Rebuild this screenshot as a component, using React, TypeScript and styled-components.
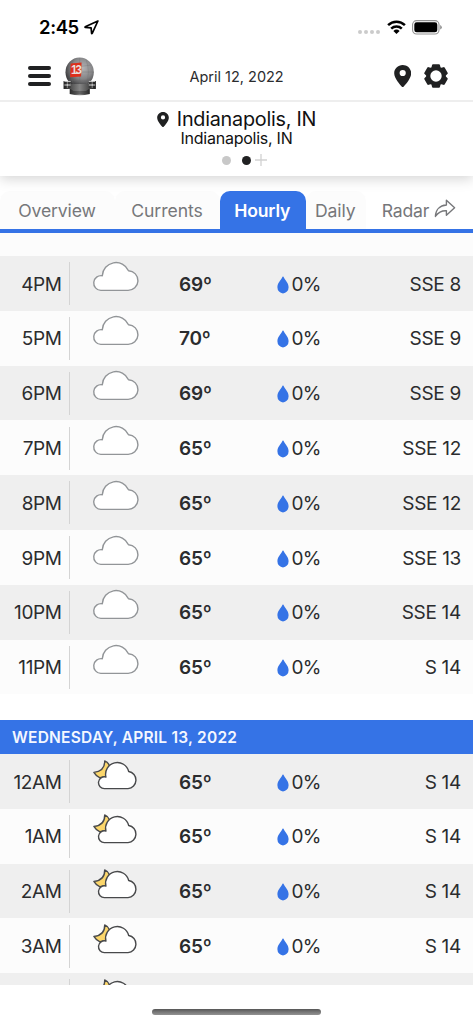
import React, { memo } from 'react';
import styled, { createGlobalStyle } from 'styled-components';

type Sky = 'cloudy' | 'night';

type Hour = {
  time: string;
  sky: Sky;
  temp: number;
  rain: number;
  wind: string;
};

const today: Hour[] = [
  { time: '4PM', sky: 'cloudy', temp: 69, rain: 0, wind: 'SSE 8' },
  { time: '5PM', sky: 'cloudy', temp: 70, rain: 0, wind: 'SSE 9' },
  { time: '6PM', sky: 'cloudy', temp: 69, rain: 0, wind: 'SSE 9' },
  { time: '7PM', sky: 'cloudy', temp: 65, rain: 0, wind: 'SSE 12' },
  { time: '8PM', sky: 'cloudy', temp: 65, rain: 0, wind: 'SSE 12' },
  { time: '9PM', sky: 'cloudy', temp: 65, rain: 0, wind: 'SSE 13' },
  { time: '10PM', sky: 'cloudy', temp: 65, rain: 0, wind: 'SSE 14' },
  { time: '11PM', sky: 'cloudy', temp: 65, rain: 0, wind: 'S 14' },
];

const tomorrow: Hour[] = [
  { time: '12AM', sky: 'night', temp: 65, rain: 0, wind: 'S 14' },
  { time: '1AM', sky: 'night', temp: 65, rain: 0, wind: 'S 14' },
  { time: '2AM', sky: 'night', temp: 65, rain: 0, wind: 'S 14' },
  { time: '3AM', sky: 'night', temp: 65, rain: 0, wind: 'S 14' },
];

const pinPath =
  'M8.7 0C3.9 0 0.2 3.7 0.2 8.3C0.2 14.2 8.7 22.6 8.7 22.6S17.2 14.2 17.2 8.3C17.2 3.7 13.5 0 8.7 0ZM8.7 4.9A3.1 3.1 0 1 1 8.7 11.1A3.1 3.1 0 0 1 8.7 4.9Z';

const PinIcon = ({ width, height }: { width: number; height: number }) => (
  <svg width={width} height={height} viewBox='0 0 17.4 22.6'>
    <path d={pinPath} fill='#202122' fillRule='evenodd' />
  </svg>
);

const GearIcon = () => (
  <svg width='24' height='24' viewBox='0 0 24 24'>
    <circle cx='12' cy='12' r='7.7' fill='none' stroke='#202122' strokeWidth='4' />
    {[0, 60, 120, 180, 240, 300].map((angle) => (
      <path
        key={angle}
        transform={`rotate(${angle} 12 12)`}
        d='M7.2 4.5L8 1.2Q8.2 0.3 9 0.3H15Q15.8 0.3 16 1.2L16.8 4.5Q12 2.8 7.2 4.5Z'
        fill='#202122'
      />
    ))}
  </svg>
);

const RadomeLogo = () => (
  <svg width='33.5' height='39' viewBox='0 0 35 39' preserveAspectRatio='none'>
    <defs>
      <radialGradient id='dome' cx='0.6' cy='0.36' r='0.66'>
        <stop offset='0' stopColor='#b4b4b6' />
        <stop offset='0.55' stopColor='#858587' />
        <stop offset='1' stopColor='#363638' />
      </radialGradient>
      <linearGradient id='neck' x1='0' x2='1'>
        <stop offset='0' stopColor='#272727' />
        <stop offset='0.5' stopColor='#858585' />
        <stop offset='1' stopColor='#222' />
      </linearGradient>
    </defs>
    <path d='M7 29H28V37Q17.5 39.5 7 37Z' fill='url(#neck)' />
    <path d='M8 34H27M8 36H27' stroke='#333' strokeWidth='0.8' />
    <circle cx='17.4' cy='15.2' r='14.8' fill='url(#dome)' />
    <path
      d='M17.4 1V29M3 15H32M5 8Q17 11 30 8M5 22Q17 26 30 22M11 2Q6 15 11 28M24 2Q29 15 24 28'
      fill='none'
      stroke='#6a6a6c'
      strokeWidth='0.3'
    />
    <path d='M1 24H8V27H27V24H34V32H27L24 34H11L8 32H1Z' fill='url(#neck)' />
    <path d='M1 24.4H8M1 28H8M27 24.4H34M27 28H34M4.5 24V31M30.5 24V31' stroke='#ddd' strokeWidth='0.9' />
    <path d='M1 26H8M1 30H8M27 26H34M27 30H34M1 24V32M34 24V32' stroke='#252525' strokeWidth='0.8' />
    <path d='M8 6.4L19.4 5.6L18.9 19.6L7.4 20.2Z' fill='#dc2f1c' />
    <LogoText x='8.3' y='17.4'>
      13
    </LogoText>
  </svg>
);

const LocationArrow = () => (
  <svg width='15' height='15' viewBox='0 0 15 15'>
    <path
      d='M13.9 1L1.2 6.8Q0.8 7.2 1.4 7.4L7.1 7.9L7.6 13.3Q7.8 14 8.2 13.4Z'
      fill='none'
      stroke='#000'
      strokeWidth='1.7'
      strokeLinejoin='round'
    />
  </svg>
);

const WifiIcon = () => (
  <svg width='19' height='15' viewBox='0 0 19 15'>
    <g fill='none' stroke='#000' strokeWidth='2.5'>
      <path d='M1.1 5.2A12 12 0 0 1 17.9 5.2' />
      <path d='M4.2 8.7A7.7 7.7 0 0 1 14.8 8.7' />
    </g>
    <path d='M6.4 10.9A4.5 4.5 0 0 1 12.6 10.9L9.5 14.1Z' />
  </svg>
);

const BatteryIcon = () => (
  <svg width='30' height='15' viewBox='0 0 30 15'>
    <rect x='0.6' y='0.6' width='26.4' height='13.4' rx='4' fill='none' stroke='#929292' strokeWidth='1.1' />
    <rect x='2.3' y='2.3' width='23' height='10' rx='2.4' />
    <path d='M28.2 5Q29.8 5.7 29.8 7.3T28.2 9.6Z' fill='#8d8d8d' />
  </svg>
);

const ShareIcon = () => (
  <svg width='22' height='19' viewBox='0 0 22 19'>
    <path
      d='M12.4 1.2L20.6 8.8L12.4 16.2V11.8C7.6 11.5 4.5 13.2 1.4 17.4C1.7 10.9 5.6 6.4 12.4 6Z'
      fill='none'
      stroke='#76777a'
      strokeWidth='1.4'
      strokeLinejoin='round'
    />
  </svg>
);

const CloudIcon = () => (
  <svg width='48' height='33' viewBox='0 0 48 33'>
    <path
      d='M8.8 30.4A7.4 7.4 0 1 1 10.3 15.7A13.7 13.7 0 0 1 36.5 10.7A9.85 9.85 0 0 1 35.7 30.4Z'
      fill='#fff'
      stroke='#929598'
      strokeWidth='1.4'
      strokeLinejoin='round'
    />
  </svg>
);

const NightCloudIcon = () => (
  <svg width='48' height='33' viewBox='0 0 48 33'>
    <g stroke='#48494b' strokeWidth='1.4' strokeLinejoin='round'>
      <path
        d='M12.7 2.9C12.9 9.2 9 13.5 1.9 14.4C3.2 16.8 5.1 18.5 8 19.8L17 18L17.6 7.9C16.7 5.5 15 3.8 12.7 2.9Z'
        fill='#fbd66b'
      />
      <path
        d='M12.6 30.6A5.9 5.9 0 1 1 13.9 19A11.71 11.71 0 0 1 36.7 13.5A8.62 8.62 0 0 1 36 30.6Z'
        fill='#fff'
      />
    </g>
  </svg>
);

const DropIcon = () => (
  <svg width='12' height='18' viewBox='0 0 12 18'>
    <path
      d='M6 0.5Q6.5 0.5 7 1.7C8.3 4.7 11.6 6.6 11.6 11.2A5.6 6.2 0 0 1 0.4 11.2C0.4 6.6 3.7 4.7 5 1.7Q5.5 0.5 6 0.5Z'
      fill='#3573e6'
    />
  </svg>
);

const HourRow = memo(function HourRow({ hour, shaded }: { hour: Hour; shaded: boolean }) {
  return (
    <Row $shaded={shaded}>
      <Time>{hour.time}</Time>
      <Divider />
      <SkyCell>{hour.sky === 'cloudy' ? <CloudIcon /> : <NightCloudIcon />}</SkyCell>
      <Temp>{hour.temp}º</Temp>
      <Rain>
        <DropIcon />
        <span>{hour.rain}%</span>
      </Rain>
      <Wind>{hour.wind}</Wind>
    </Row>
  );
});

const HourList = ({ hours }: { hours: Hour[] }) => (
  <>
    {hours.map((hour, index) => (
      <HourRow key={hour.time} hour={hour} shaded={index % 2 === 0} />
    ))}
  </>
);

export default function App() {
  return (
    <Screen>
      <GlobalStyle />
      <StatusBar>
        <Clock>2:45</Clock>
        <LocationArrow />
        <Signal>
          <i />
          <i />
          <i />
          <i />
        </Signal>
        <WifiIcon />
        <BatteryIcon />
      </StatusBar>
      <Toolbar>
        <Menu>
          <i />
          <i />
          <i />
        </Menu>
        <RadomeLogo />
        <CurrentDate>April 12, 2022</CurrentDate>
        <PinIcon width={17.4} height={22.6} />
        <GearIcon />
      </Toolbar>
      <Place>
        <PlaceName>
          <PinIcon width={12} height={15.5} />
          <span>Indianapolis, IN</span>
        </PlaceName>
        <PlaceDetail>Indianapolis, IN</PlaceDetail>
        <Pager>
          <Dot />
          <Dot $active />
          <svg width='12' height='12' viewBox='0 0 12 12'>
            <path d='M6 0V12M0 6H12' stroke='#d2d2d2' strokeWidth='1.3' />
          </svg>
        </Pager>
      </Place>
      <Tabs>
        <Tab $width={115} $spacing={-0.12}>
          Overview
        </Tab>
        <Tab $width={105} $spacing={-0.05}>
          Currents
        </Tab>
        <Tab $width={85.5} $spacing={-0.2} $active>
          Hourly
        </Tab>
        <Tab $width={60.5} $spacing={-0.1}>
          Daily
        </Tab>
        <Tab $width={107} $spacing={-0.2} $plain>
          Radar
          <ShareIcon />
        </Tab>
      </Tabs>
      <Forecast>
        <HourList hours={today} />
        <DayHeader>WEDNESDAY, APRIL 13, 2022</DayHeader>
        <HourList hours={tomorrow} />
        <Row $shaded>
          <Time />
          <Divider />
          <SkyCell>
            <NightCloudIcon />
          </SkyCell>
        </Row>
      </Forecast>
      <Footer>
        <HomeIndicator />
      </Footer>
    </Screen>
  );
}

const GlobalStyle = createGlobalStyle`
  * {
    box-sizing: border-box;
  }

  body {
    margin: 0;
    background: #fff;
    font-family: Inter, 'Liberation Sans', sans-serif;
    color: #2b2c2e;
  }

  svg {
    display: block;
    flex: none;
  }
`;

const LogoText = styled.text`
  font-family: 'Liberation Sans', sans-serif;
  font-size: 12px;
  font-weight: 700;
  letter-spacing: -2px;
  fill: #e9dedb;
`;

const Screen = styled.div`
  display: flex;
  flex-direction: column;
  width: 473px;
  height: 1024px;
  overflow: hidden;
  background: #fff;
`;

const StatusBar = styled.div`
  display: flex;
  flex: none;
  align-items: center;
  height: 54px;
  padding: 0 31px 0 39px;

  svg:last-child {
    margin-left: 6.5px;
  }
`;

const Clock = styled.span`
  width: 45px;
  font-size: 18.5px;
  font-weight: 600;
  letter-spacing: -0.4px;
  color: #000;
`;

const Signal = styled.div`
  display: flex;
  gap: 2px;
  margin: 10px 7px 0 auto;

  i {
    width: 4px;
    height: 4px;
    border-radius: 50%;
    background: #cbcbcb;
  }
`;

const Toolbar = styled.div`
  display: flex;
  flex: none;
  align-items: center;
  height: 48px;
  padding: 0 25px 2px 27.5px;
  border-bottom: 2px solid #eee;

  svg:last-child {
    margin-left: 13px;
  }
`;

const Menu = styled.div`
  display: flex;
  flex-direction: column;
  gap: 4.6px;
  width: 23.5px;
  margin-right: 11.5px;

  i {
    height: 3.6px;
    border-radius: 2px;
    background: #202122;
  }
`;

const CurrentDate = styled.div`
  flex: 1;
  padding-right: 16.5px;
  text-align: center;
  font-size: 14.5px;
`;

const Place = styled.div`
  display: flex;
  flex: none;
  flex-direction: column;
  align-items: center;
  height: 74px;
  padding-top: 6px;
  box-shadow: 0 3px 12px rgba(0, 0, 0, 0.17);
  clip-path: inset(0 0 -20px 0);
  color: #111;
`;

const PlaceName = styled.div`
  display: flex;
  align-items: center;
  gap: 8px;
  font-size: 19.8px;
  line-height: 23px;
  letter-spacing: -0.25px;
`;

const PlaceDetail = styled.div`
  font-size: 16px;
  line-height: 15px;
  letter-spacing: -0.25px;
`;

const Pager = styled.div`
  display: flex;
  align-items: center;
  margin: 8px 0 0 16px;

  svg {
    margin-left: -7px;
  }
`;

const Dot = styled.span<{ $active?: boolean }>`
  width: 9px;
  height: 9px;
  margin-right: 11px;
  border-radius: 50%;
  background: ${({ $active }) => ($active ? '#202122' : '#c8c8c8')};
`;

const Tabs = styled.div`
  display: flex;
  flex: none;
  height: 57px;
  padding-top: 15px;
  border-bottom: 4px solid #3573e6;
`;

const Tab = styled.div<{ $width: number; $spacing: number; $active?: boolean; $plain?: boolean }>`
  display: flex;
  justify-content: center;
  gap: 5px;
  flex: none;
  width: ${({ $width }) => $width}px;
  padding-right: 1px;
  border-radius: 10px 10px 0 0;
  background: ${({ $active, $plain }) => ($active ? '#3573e6' : $plain ? 'none' : '#fcfcfc')};
  color: ${({ $active }) => ($active ? '#fff' : '#76777a')};
  font-size: 17.6px;
  font-weight: ${({ $active }) => ($active ? 600 : 400)};
  line-height: 39px;
  letter-spacing: ${({ $spacing }) => $spacing}px;

  svg {
    margin-top: 8px;
  }
`;

const Forecast = styled.div`
  flex: none;
  height: 752px;
  padding-top: 23px;
  overflow: hidden;
  background: linear-gradient(#fcfcfc 23px, #fff 23px);
`;

const Row = styled.div<{ $shaded: boolean }>`
  display: flex;
  align-items: center;
  height: 54.8px;
  padding: 2.6px 12px 0 0;
  background: ${({ $shaded }) => ($shaded ? '#efefef' : '#fcfcfc')};
  font-size: 19px;
  line-height: 24px;
`;

const Time = styled.div`
  width: 61.5px;
  text-align: right;
  letter-spacing: -0.4px;
`;

const Divider = styled.div`
  width: 1px;
  height: 43px;
  margin: 0 22px 2px 7.5px;
  background: #d4d4d4;
`;

const SkyCell = styled.div`
  align-self: flex-start;
  width: 87px;
  padding-top: 1px;
`;

const Temp = styled.div`
  width: 98px;
  font-weight: 600;
  letter-spacing: -0.2px;
`;

const Rain = styled.div`
  display: flex;
  align-items: center;
  gap: 2.5px;
  letter-spacing: -0.8px;
`;

const Wind = styled.div`
  flex: 1;
  text-align: right;
  letter-spacing: -0.3px;
`;

const DayHeader = styled.div`
  height: 34.4px;
  margin-top: 25.2px;
  padding-left: 12px;
  background: #3573e6;
  color: #f4f7ff;
  font-size: 15.5px;
  font-weight: 600;
  line-height: 35px;
  letter-spacing: 0.24px;
`;

const Footer = styled.div`
  display: flex;
  flex: none;
  justify-content: center;
  height: 39px;
  padding-top: 24px;
`;

const HomeIndicator = styled.div`
  width: 169px;
  height: 6px;
  border-radius: 3px;
  background: linear-gradient(#555, #777 50%, #929292);
`;
